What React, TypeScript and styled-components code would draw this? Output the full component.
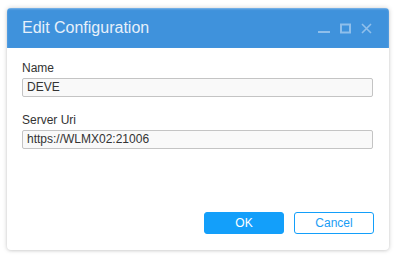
import React from "react";
import styled, { createGlobalStyle } from "styled-components";

const Global = createGlobalStyle`
  html, body { margin: 0; padding: 0; background: #ffffff; }
  body { font-family: "Liberation Sans", Arial, sans-serif; }
`;

const Page = styled.div`
  width: 399px;
  height: 259px;
  overflow: hidden;
  padding-top: 8px;
  padding-left: 7px;
  box-sizing: border-box;
`;

const Dialog = styled.div`
  width: 382px;
  height: 242px;
  display: flex;
  flex-direction: column;
  background: #ffffff;
  border-radius: 4px;
  box-shadow: 0 0 5px rgba(0, 0, 0, 0.18), 0 1px 3px rgba(0, 0, 0, 0.08);
  overflow: hidden;
`;

const TitleBar = styled.div`
  height: 40px;
  flex: none;
  display: flex;
  align-items: center;
  padding: 0 17px 0 15px;
  background: #3f92dc;
  box-shadow: inset 0 1px 2px rgba(255, 255, 255, 0.35);
`;

const Title = styled.div`
  flex: 1;
  font-size: 16px;
  color: #e6f0fa;
`;

const Controls = styled.div`
  display: flex;
  align-items: center;
  gap: 10px;
  color: rgba(255, 255, 255, 0.42);
`;

const Body = styled.div`
  flex: 1;
  display: flex;
  flex-direction: column;
  padding: 13px 15px 16px 15px;
`;

const Field = styled.div<{ $gap?: number }>`
  display: flex;
  flex-direction: column;
  margin-top: ${(p) => p.$gap ?? 0}px;
`;

const Label = styled.label`
  font-size: 12px;
  line-height: 14px;
  color: #333333;
  margin-bottom: 3px;
`;

const Input = styled.div`
  box-sizing: border-box;
  height: 19px;
  width: 351px;
  border: 1px solid #c4c4c4;
  border-radius: 2px;
  background: #f9f9f9;
  font-size: 12px;
  line-height: 17px;
  color: #333333;
  padding-left: 4px;
`;

const Footer = styled.div`
  margin-top: auto;
  display: flex;
  justify-content: flex-end;
  gap: 10px;
`;

const Button = styled.button<{ $primary?: boolean }>`
  width: 80px;
  height: 22px;
  box-sizing: border-box;
  border-radius: 3px;
  font-family: "Liberation Sans", Arial, sans-serif;
  font-size: 12px;
  padding: 0;
  border: 1px solid #139ffa;
  background: ${(p) => (p.$primary ? "#139ffa" : "#ffffff")};
  color: ${(p) => (p.$primary ? "#ffffff" : "#1a9df4")};
`;

export default function App() {
  return (
    <>
      <Global />
      <Page>
        <Dialog>
          <TitleBar>
            <Title>Edit Configuration</Title>
            <Controls>
              <svg width="12" height="12" viewBox="0 0 12 12">
                <rect x="0" y="9" width="12" height="2" fill="currentColor" />
              </svg>
              <svg width="11" height="11" viewBox="0 0 11 11">
                <rect x="1" y="1.5" width="9" height="8" fill="none" stroke="currentColor" strokeWidth="2" />
              </svg>
              <svg width="11" height="11" viewBox="0 0 11 11">
                <path d="M1 1 L10 10 M10 1 L1 10" stroke="currentColor" strokeWidth="1.6" />
              </svg>
            </Controls>
          </TitleBar>
          <Body>
            <Field>
              <Label>Name</Label>
              <Input>DEVE</Input>
            </Field>
            <Field $gap={16}>
              <Label>Server Uri</Label>
              <Input>https://WLMX02:21006</Input>
            </Field>
            <Footer>
              <Button $primary>OK</Button>
              <Button>Cancel</Button>
            </Footer>
          </Body>
        </Dialog>
      </Page>
    </>
  );
}
